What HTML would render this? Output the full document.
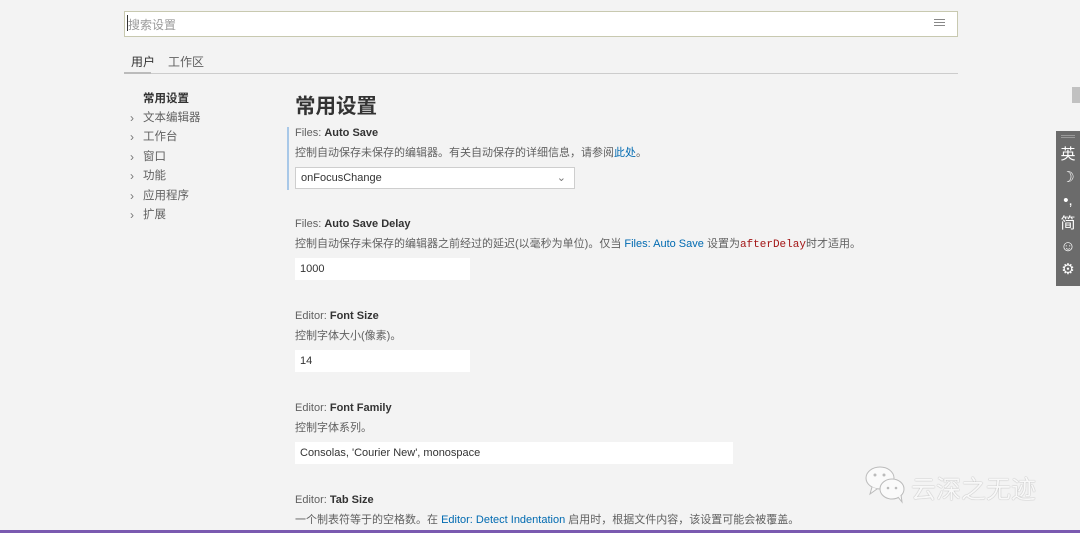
<!DOCTYPE html><html><head><meta charset="utf-8"><style>
body{margin:0;width:1080px;height:533px;background:#f3f3f3;font-family:"Liberation Sans","Noto Sans CJK SC",sans-serif;position:relative;overflow:hidden;color:#616161}
.a{position:absolute;white-space:nowrap}
.s{font-size:12px}
.t{font-size:11px;color:#616161}
.b{color:#333;font-weight:bold}
.in{position:absolute;background:#fff;font-size:11px;color:#333;padding-left:5px;box-sizing:border-box;line-height:22px;height:22px}
.l{color:#006ab1}
.nv{position:absolute;left:143px;font-size:11.5px;color:#616161}
.ch{position:absolute;left:130px;font-size:12px;color:#777}
</style></head><body>
<div class="a" style="left:124px;top:11px;width:834px;height:26px;border:1px solid #c8c9b0;box-sizing:border-box;background:#fff"></div>
<div class="a" style="left:128px;top:16px;font-size:12px;color:#9a9a9a">搜索设置</div>
<div class="a" style="left:127px;top:15px;width:1px;height:16px;background:#333"></div>
<div class="a" style="left:934px;top:19px;width:11px;height:1px;background:#888;box-shadow:0 3px #888,0 6px #888"></div>
<div class="a s" style="left:131px;top:53px;color:#333">用户</div>
<div class="a s" style="left:168px;top:53px">工作区</div>
<div class="a" style="left:124px;top:73px;width:834px;height:1px;background:#ccc"></div>
<div class="a" style="left:124px;top:72px;width:27px;height:2px;background:#bbb"></div>
<div class="a s b" style="left:143px;top:90px;font-size:11.5px">常用设置</div>
<div class="ch" style="top:111px">›</div><div class="nv" style="top:109px">文本编辑器</div>
<div class="ch" style="top:130px">›</div><div class="nv" style="top:128px">工作台</div>
<div class="ch" style="top:150px">›</div><div class="nv" style="top:148px">窗口</div>
<div class="ch" style="top:169px">›</div><div class="nv" style="top:167px">功能</div>
<div class="ch" style="top:189px">›</div><div class="nv" style="top:187px">应用程序</div>
<div class="ch" style="top:208px">›</div><div class="nv" style="top:206px">扩展</div>
<div class="a" style="left:295px;top:89px;font-size:20.5px;font-weight:bold;color:#333">常用设置</div>
<div class="a" style="left:287px;top:127px;width:2px;height:63px;background:#a8c8e8"></div>
<div class="a t" style="left:295px;top:127px">Files: <span class="b" style="font-weight:600">Auto Save</span></div>
<div class="a t" style="left:295px;top:144px">控制自动保存未保存的编辑器。有关自动保存的详细信息，请参阅<span class="l">此处</span>。</div>
<div class="in" style="left:295px;top:167px;width:280px;border:1px solid #cecece;line-height:20px">onFocusChange<span style="position:absolute;right:8px;color:#777">⌄</span></div>
<div class="a t" style="left:295px;top:218px">Files: <span class="b" style="font-weight:600">Auto Save Delay</span></div>
<div class="a t" style="left:295px;top:235px">控制自动保存未保存的编辑器之前经过的延迟(以毫秒为单位)。仅当 <span class="l">Files: Auto Save</span> 设置为<span style="font-family:'Liberation Mono',monospace;color:#a31515">afterDelay</span>时才适用。</div>
<div class="in" style="left:295px;top:258px;width:175px">1000</div>
<div class="a t" style="left:295px;top:310px">Editor: <span class="b" style="font-weight:600">Font Size</span></div>
<div class="a t" style="left:295px;top:327px">控制字体大小(像素)。</div>
<div class="in" style="left:295px;top:350px;width:175px">14</div>
<div class="a t" style="left:295px;top:402px">Editor: <span class="b" style="font-weight:600">Font Family</span></div>
<div class="a t" style="left:295px;top:419px">控制字体系列。</div>
<div class="in" style="left:295px;top:442px;width:438px">Consolas, 'Courier New', monospace</div>
<div class="a t" style="left:295px;top:494px">Editor: <span class="b" style="font-weight:600">Tab Size</span></div>
<div class="a t" style="left:295px;top:511px">一个制表符等于的空格数。在 <span class="l">Editor: Detect Indentation</span> 启用时，根据文件内容，该设置可能会被覆盖。</div>
<div class="a" style="left:1072px;top:87px;width:8px;height:16px;background:#c1c1c1"></div>
<div class="a" style="left:1056px;top:131px;width:24px;height:155px;background:#6b6b6b;color:#fff;text-align:center;font-size:15px;line-height:23px;padding-top:12px;box-sizing:border-box">英<br>☽<br>•,<br>简<br>☺<br>⚙</div>
<div class="a" style="left:1061px;top:135px;width:14px;height:1px;background:#999;box-shadow:0 2px #999"></div>
<svg class="a" style="left:864px;top:464px" width="46" height="40" viewBox="0 0 46 40"><ellipse cx="16" cy="14" rx="14" ry="11" fill="#fafafa" stroke="#bbb"/><path d="M8 23 L6 30 L13 25" fill="#fafafa" stroke="#bbb"/><ellipse cx="28" cy="25" rx="12" ry="10" fill="#fafafa" stroke="#bbb"/><path d="M34 33 L38 38 L37 31" fill="#fafafa" stroke="#bbb"/><circle cx="11" cy="11" r="1.5" fill="#bbb"/><circle cx="20" cy="11" r="1.5" fill="#bbb"/><circle cx="24" cy="24" r="1.3" fill="#bbb"/><circle cx="32" cy="24" r="1.3" fill="#bbb"/></svg>
<div class="a" style="left:911px;top:470px;font-size:25px;color:#f8f8f8;text-shadow:0 0 1px #888">云深之无迹</div>
<div class="a" style="left:0;top:530px;width:1080px;height:3px;background:#7a5ab0"></div>
</body></html>
